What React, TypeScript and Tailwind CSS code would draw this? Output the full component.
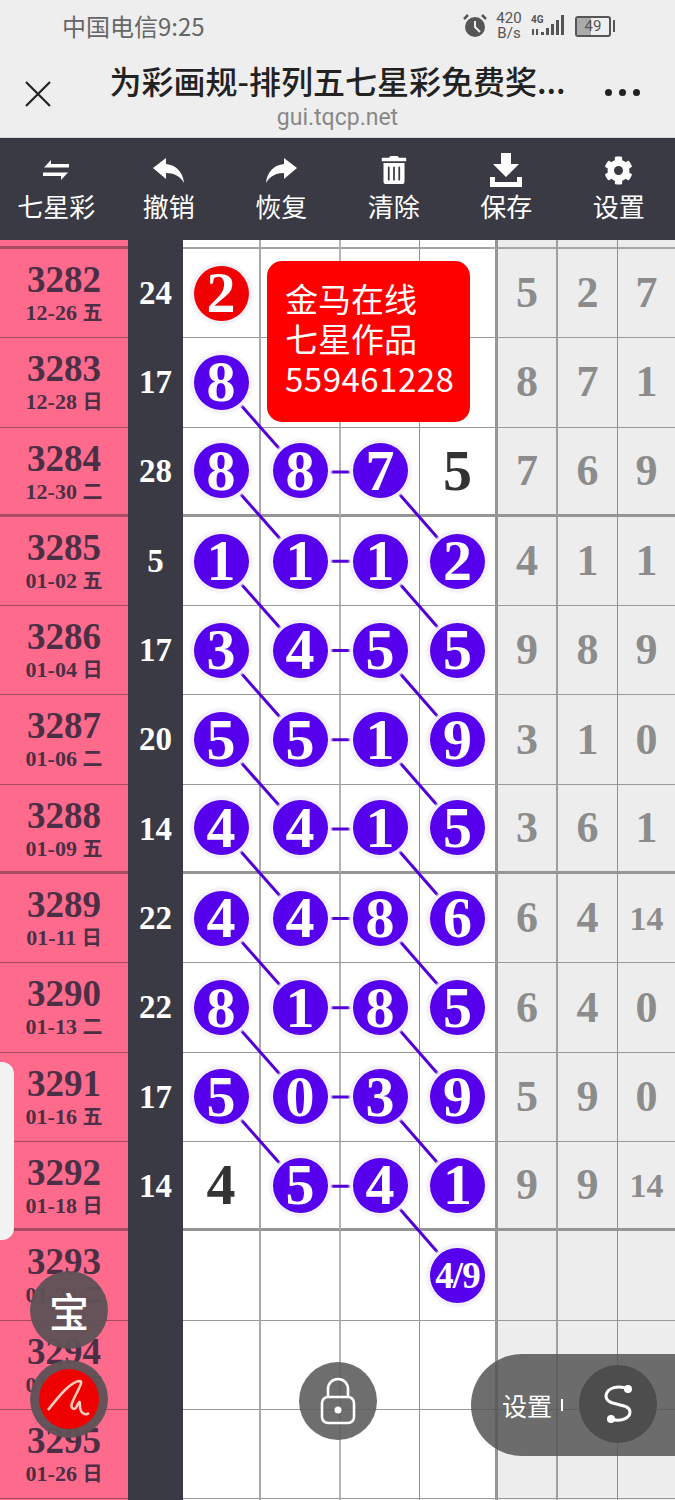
import { FaCog, FaTrashAlt } from "react-icons/fa"

interface Row {
  no: string;
  date: string;
  week: string;
  sum: string;
  balls: string[];
  rest: string[];
}

const rows: Row[] = [
  { no: "3282", date: "12-26", week: "五", sum: "24", balls: ["2", "", "", ""], rest: ["5", "2", "7"] },
  { no: "3283", date: "12-28", week: "日", sum: "17", balls: ["8", "", "", ""], rest: ["8", "7", "1"] },
  { no: "3284", date: "12-30", week: "二", sum: "28", balls: ["8", "8", "7", "p5"], rest: ["7", "6", "9"] },
  { no: "3285", date: "01-02", week: "五", sum: "5", balls: ["1", "1", "1", "2"], rest: ["4", "1", "1"] },
  { no: "3286", date: "01-04", week: "日", sum: "17", balls: ["3", "4", "5", "5"], rest: ["9", "8", "9"] },
  { no: "3287", date: "01-06", week: "二", sum: "20", balls: ["5", "5", "1", "9"], rest: ["3", "1", "0"] },
  { no: "3288", date: "01-09", week: "五", sum: "14", balls: ["4", "4", "1", "5"], rest: ["3", "6", "1"] },
  { no: "3289", date: "01-11", week: "日", sum: "22", balls: ["4", "4", "8", "6"], rest: ["6", "4", "14"] },
  { no: "3290", date: "01-13", week: "二", sum: "22", balls: ["8", "1", "8", "5"], rest: ["6", "4", "0"] },
  { no: "3291", date: "01-16", week: "五", sum: "17", balls: ["5", "0", "3", "9"], rest: ["5", "9", "0"] },
  { no: "3292", date: "01-18", week: "日", sum: "14", balls: ["p4", "5", "4", "1"], rest: ["9", "9", "14"] },
  { no: "3293", date: "01-20", week: "二", sum: "", balls: ["", "", "", "4/9"], rest: ["", "", ""] },
  { no: "3294", date: "01-23", week: "五", sum: "", balls: ["", "", "", ""], rest: ["", "", ""] },
  { no: "3295", date: "01-26", week: "日", sum: "", balls: ["", "", "", ""], rest: ["", "", ""] },
]

const colX = [221, 300, 380, 458]
const rowY = (i: number) => 293.3 + 89.3 * i

const serif = "font-['Liberation_Serif','Noto_Sans_CJK_SC',serif] font-bold"
const sans = "font-['Noto_Sans_CJK_SC','Noto_Sans',sans-serif]"

const mainCols = [
  "w-[78px] border-r-2 border-r-[#a9a9a9]",
  "w-[80px] border-r-2 border-r-[#b4b4b4]",
  "w-[79px] border-r border-r-[#8f8f8f]",
  "w-[78px] border-r-[3px] border-r-[#959595]",
]
const restCols = [
  "w-[60px] border-r-2 border-r-[#a0a0a0]",
  "w-[60px] border-r border-r-[#8f8f8f]",
  "w-[57px]",
]

function Ball({ value, red }: { value: string; red: boolean }) {
  if (value.startsWith("p")) {
    return <span className={`${serif} text-[58px] leading-none text-[#333]`}>{value.slice(1)}</span>
  }
  return (
    <div
      className={`${serif} relative z-[2] flex h-[55px] w-[55px] shrink-0 items-center justify-center rounded-full text-white shadow-[0_0_2px_4px_#f3f1f7] ${
        red ? "bg-[#f00000]" : "bg-[#5600ee]"
      } ${value.length > 1 ? "text-[37px] tracking-[-1px]" : "text-[58px]"} leading-none`}
    >
      {value}
    </div>
  )
}

function Lines() {
  const segs: number[][] = []
  for (let r = 1; r <= 9; r++) segs.push([colX[0], rowY(r), colX[1], rowY(r + 1)])
  for (let r = 2; r <= 10; r++) {
    segs.push([colX[1], rowY(r), colX[2], rowY(r)])
    segs.push([colX[2], rowY(r), colX[3], rowY(r + 1)])
  }
  return (
    <svg className="absolute inset-0 z-[1]" width="675" height="1500" viewBox="0 0 675 1500">
      {segs.map((s, i) => (
        <line key={i} x1={s[0]} y1={s[1]} x2={s[2]} y2={s[3]} stroke="#5300d8" strokeWidth="3" />
      ))}
    </svg>
  )
}

function GridRow({ row, index }: { row: Row; index: number }) {
  const thick = index === 2 || index === 6 || index === 10
  const line = thick ? "border-b-[3px] border-b-[#959595]" : "border-b border-b-[#999]"
  return (
    <div className="flex h-[89.3px]">
      <div
        className={`flex w-[128px] shrink-0 flex-col items-center bg-[#fd6a8c] pt-[12px] text-[#4b2f44] ${serif} ${
          thick ? "border-b-[3px] border-b-[#a84a62]" : "border-b border-b-[#a84a62]"
        }`}
      >
        <span className="text-[37px] leading-[37px]">{row.no}</span>
        <span className="mt-[2px] text-[22px] leading-[26px]">
          {row.date} <span className="text-[20px]">{row.week}</span>
        </span>
      </div>
      <div className={`flex w-[55px] shrink-0 items-center justify-center bg-[#3a3a44] text-[33px] text-white ${serif}`}>
        {row.sum}
      </div>
      {row.balls.map((b, i) => (
        <div key={i} className={`flex shrink-0 items-center justify-center bg-white ${mainCols[i]} ${line}`}>
          {b && <Ball value={b} red={index === 0} />}
        </div>
      ))}
      {row.rest.map((v, i) => (
        <div
          key={i}
          className={`flex shrink-0 items-center justify-center bg-[#ededed] text-[#8c8c8c] ${serif} ${restCols[i]} ${line} ${
            v.length > 1 ? "text-[34px]" : "text-[44px]"
          }`}
        >
          {v}
        </div>
      ))}
    </div>
  )
}

function StripRow({ height, line }: { height: string; line: boolean }) {
  const b = line ? "border-b-2 border-b-[#a5a5a5]" : ""
  return (
    <div className={`flex ${height}`}>
      <div className={`w-[128px] shrink-0 bg-[#fd6a8c] ${line ? "border-b-[3px] border-b-[#a84a62]" : ""}`} />
      <div className="w-[55px] shrink-0 bg-[#3a3a44]" />
      {mainCols.map((c, i) => (
        <div key={i} className={`shrink-0 bg-white ${c} ${b}`} />
      ))}
      {restCols.map((c, i) => (
        <div key={i} className={`shrink-0 bg-[#ededed] ${c} ${b}`} />
      ))}
    </div>
  )
}

function SwapIcon() {
  return (
    <svg width="26" height="20" viewBox="0 0 26 20" fill="white">
      <path d="M8 0 L8 4 L26 4 L26 7.5 L1 7.5 Z" />
      <path d="M18 20 L18 16 L0 16 L0 12.5 L25 12.5 Z" />
    </svg>
  )
}

function ReplyIcon({ flip }: { flip?: boolean }) {
  return (
    <svg width="31" height="25" viewBox="0 0 31 25" fill="white" className={flip ? "-scale-x-100" : ""}>
      <path d="M0 10 L13 0 V6 C23 7 30 14 31 25 C27 18 21 15 13 15 V21 Z" />
    </svg>
  )
}

function SaveIcon() {
  return (
    <svg width="32" height="34" viewBox="0 0 32 34" fill="white">
      <path d="M11 0 H21 V11 H29 L16 24 L3 11 H11 Z" />
      <path d="M0 24 H5 V29 H27 V24 H32 V34 H0 Z" />
    </svg>
  )
}

function LockIcon() {
  return (
    <svg width="36" height="48" viewBox="0 0 36 48" fill="none" stroke="white" strokeWidth="2.6">
      <rect x="2" y="20" width="32" height="26" rx="6" />
      <path d="M8 20 V12 A10 10 0 0 1 28 12 V20" />
      <circle cx="18" cy="33" r="3.5" fill="white" stroke="none" />
    </svg>
  )
}

function ToolItem({ label, icon }: { label: string; icon: React.ReactNode }) {
  return (
    <div className="flex flex-1 flex-col items-center text-white">
      <div className="flex h-[36px] items-center justify-center">{icon}</div>
      <span className={`${sans} text-[26px] leading-[36px]`}>{label}</span>
    </div>
  )
}

function StatusIcons() {
  return (
    <div className="flex items-center gap-[8px] text-[#555]">
      <svg width="24" height="24" viewBox="0 0 24 24">
        <circle cx="12" cy="13" r="10" fill="#555" />
        <path d="M12 7 V13 L17 18" stroke="#eee" strokeWidth="2" fill="none" />
        <path d="M1 5 L5 1 M23 5 L19 1" stroke="#555" strokeWidth="2.5" />
      </svg>
      <div className="w-[28px] text-center font-['Roboto',sans-serif] text-[15px] leading-[15px]">
        420
        <br />
        B/s
      </div>
      <svg width="36" height="26" viewBox="0 0 36 26" fill="#555">
        <text x="0" y="10" fontSize="10" fontWeight="700" fontFamily="Roboto, sans-serif">4G</text>
        <rect x="1" y="16" width="2" height="6" />
        <rect x="5" y="16" width="2" height="6" />
        <rect x="10" y="19" width="3" height="3" />
        <rect x="15" y="15" width="3" height="7" />
        <rect x="20" y="11" width="3" height="11" />
        <rect x="25" y="7" width="3" height="15" />
        <rect x="30" y="2" width="3" height="20" />
      </svg>
      <div className="flex items-center gap-[2px]">
        <div className="relative flex h-[21px] w-[36px] items-center justify-center overflow-hidden rounded-[3px] border-2 border-[#555] font-['Roboto',sans-serif] text-[15px] leading-none">
          <div className="absolute inset-y-0 left-0 w-[45%] bg-[#aaa]" />
          <span className="relative">49</span>
        </div>
        <div className="h-[12px] w-[2px] bg-[#555]" />
      </div>
    </div>
  )
}

export default function App() {
  return (
    <div className="relative h-[1500px] w-[675px] overflow-hidden bg-[#eeeeee]">
      {/* Status bar */}
      <div className="flex h-[50px] items-center justify-between pl-[62px] pr-[60px] pt-[2px]">
        <span className={`${sans} text-[24px] leading-none text-[#666]`}>中国电信9:25</span>
        <StatusIcons />
      </div>

      {/* Browser title */}
      <div className="flex h-[88px] border-b border-b-[#d8d8d8]">
        <div className="flex w-[75px] items-center justify-center">
          <svg width="28" height="28" viewBox="0 0 28 28" stroke="#222" strokeWidth="2.2">
            <path d="M2 2 L26 26 M26 2 L2 26" />
          </svg>
        </div>
        <div className="flex flex-1 flex-col items-center pt-[8px]">
          <div className={`${sans} whitespace-nowrap text-[32px] font-medium leading-[44px] text-[#222]`}>
            为彩画规-排列五七星彩免费奖...
          </div>
          <div className="mt-[2px] font-['Roboto',sans-serif] text-[23px] leading-[28px] text-[#888]">gui.tqcp.net</div>
        </div>
        <div className="flex w-[75px] items-center justify-center gap-[7px] pr-[30px] pb-[2px]">
          <div className="h-[7px] w-[7px] shrink-0 rounded-full bg-[#222]" />
          <div className="h-[7px] w-[7px] shrink-0 rounded-full bg-[#222]" />
          <div className="h-[7px] w-[7px] shrink-0 rounded-full bg-[#222]" />
        </div>
      </div>

      {/* Toolbar */}
      <div className="flex h-[102px] bg-[#3a3a44] pt-[14px]">
        <ToolItem label="七星彩" icon={<SwapIcon />} />
        <ToolItem label="撤销" icon={<ReplyIcon />} />
        <ToolItem label="恢复" icon={<ReplyIcon flip />} />
        <ToolItem label="清除" icon={<FaTrashAlt size={28} color="white" />} />
        <ToolItem label="保存" icon={<SaveIcon />} />
        <ToolItem label="设置" icon={<FaCog size={29} color="white" />} />
      </div>

      {/* Table */}
      <Lines />
      <StripRow height="h-[9px]" line />
      {rows.map((row, i) => (
        <GridRow key={row.no} row={row} index={i} />
      ))}
      <StripRow height="h-[6px]" line={false} />

      {/* Ad over the table */}
      <div
        className={`${sans} absolute left-[267px] top-[261px] z-[3] flex h-[161px] w-[203px] flex-col justify-center rounded-[15px] bg-[#ff0000] pb-[8px] pl-[18px] text-[33px] leading-[40px] text-white`}
      >
        <span>金马在线</span>
        <span>七星作品</span>
        <span className="tracking-[0.5px]">559461228</span>
      </div>

      {/* Side handle */}
      <div className="absolute left-0 top-[1062px] z-10 h-[178px] w-[14px] rounded-r-[12px] bg-[#f2f2f2]" />

      {/* Floating buttons */}
      <div
        className={`${sans} absolute left-[30px] top-[1271px] z-10 flex h-[78px] w-[78px] items-center justify-center rounded-full bg-[#5e5256]/95 text-[40px] font-medium text-white`}
      >
        宝
      </div>
      <div className="absolute left-[30px] top-[1360px] z-10 flex h-[78px] w-[78px] items-center justify-center rounded-full bg-[#5e5256]/95">
        <div className="flex h-[60px] w-[60px] items-center justify-center rounded-full bg-[#ee0000]">
          <svg width="60" height="60" viewBox="0 0 60 60" fill="none" stroke="#ffd0c0" strokeWidth="2.5">
            <path d="M9 41 C20 27 32 12 41 12 C45 12 38 22 33 34 C31 40 36 42 38 37 C40 32 41 31 41 37 C41 44 46 47 50 44" />
          </svg>
        </div>
      </div>
      <div className="absolute left-[299px] top-[1362px] z-10 flex h-[78px] w-[78px] items-center justify-center rounded-full bg-[#5e5e5e]/90">
        <LockIcon />
      </div>
      <div className="absolute left-[471px] top-[1354px] z-10 flex h-[102px] w-[204px] items-center rounded-l-[51px] bg-[#555]/85 pl-[31px]">
        <span className={`${sans} text-[25px] leading-none text-white`}>设置</span>
        <div className="ml-[9px] h-[12px] w-[2px] bg-white" />
        <div className="mb-[3px] ml-[16px] flex h-[78px] w-[78px] items-center justify-center rounded-full bg-[#4d4d4d]">
          <svg width="32" height="42" viewBox="0 0 32 42" fill="none" stroke="white" strokeWidth="3">
            <path d="M26 6 C17 2 5 4 4 13 C4 24 28 19 28 29 C28 36 17 39 9 36" />
            <circle cx="26" cy="6" r="4" fill="white" stroke="none" />
            <circle cx="9" cy="36" r="4" fill="white" stroke="none" />
          </svg>
        </div>
      </div>
    </div>
  )
}
